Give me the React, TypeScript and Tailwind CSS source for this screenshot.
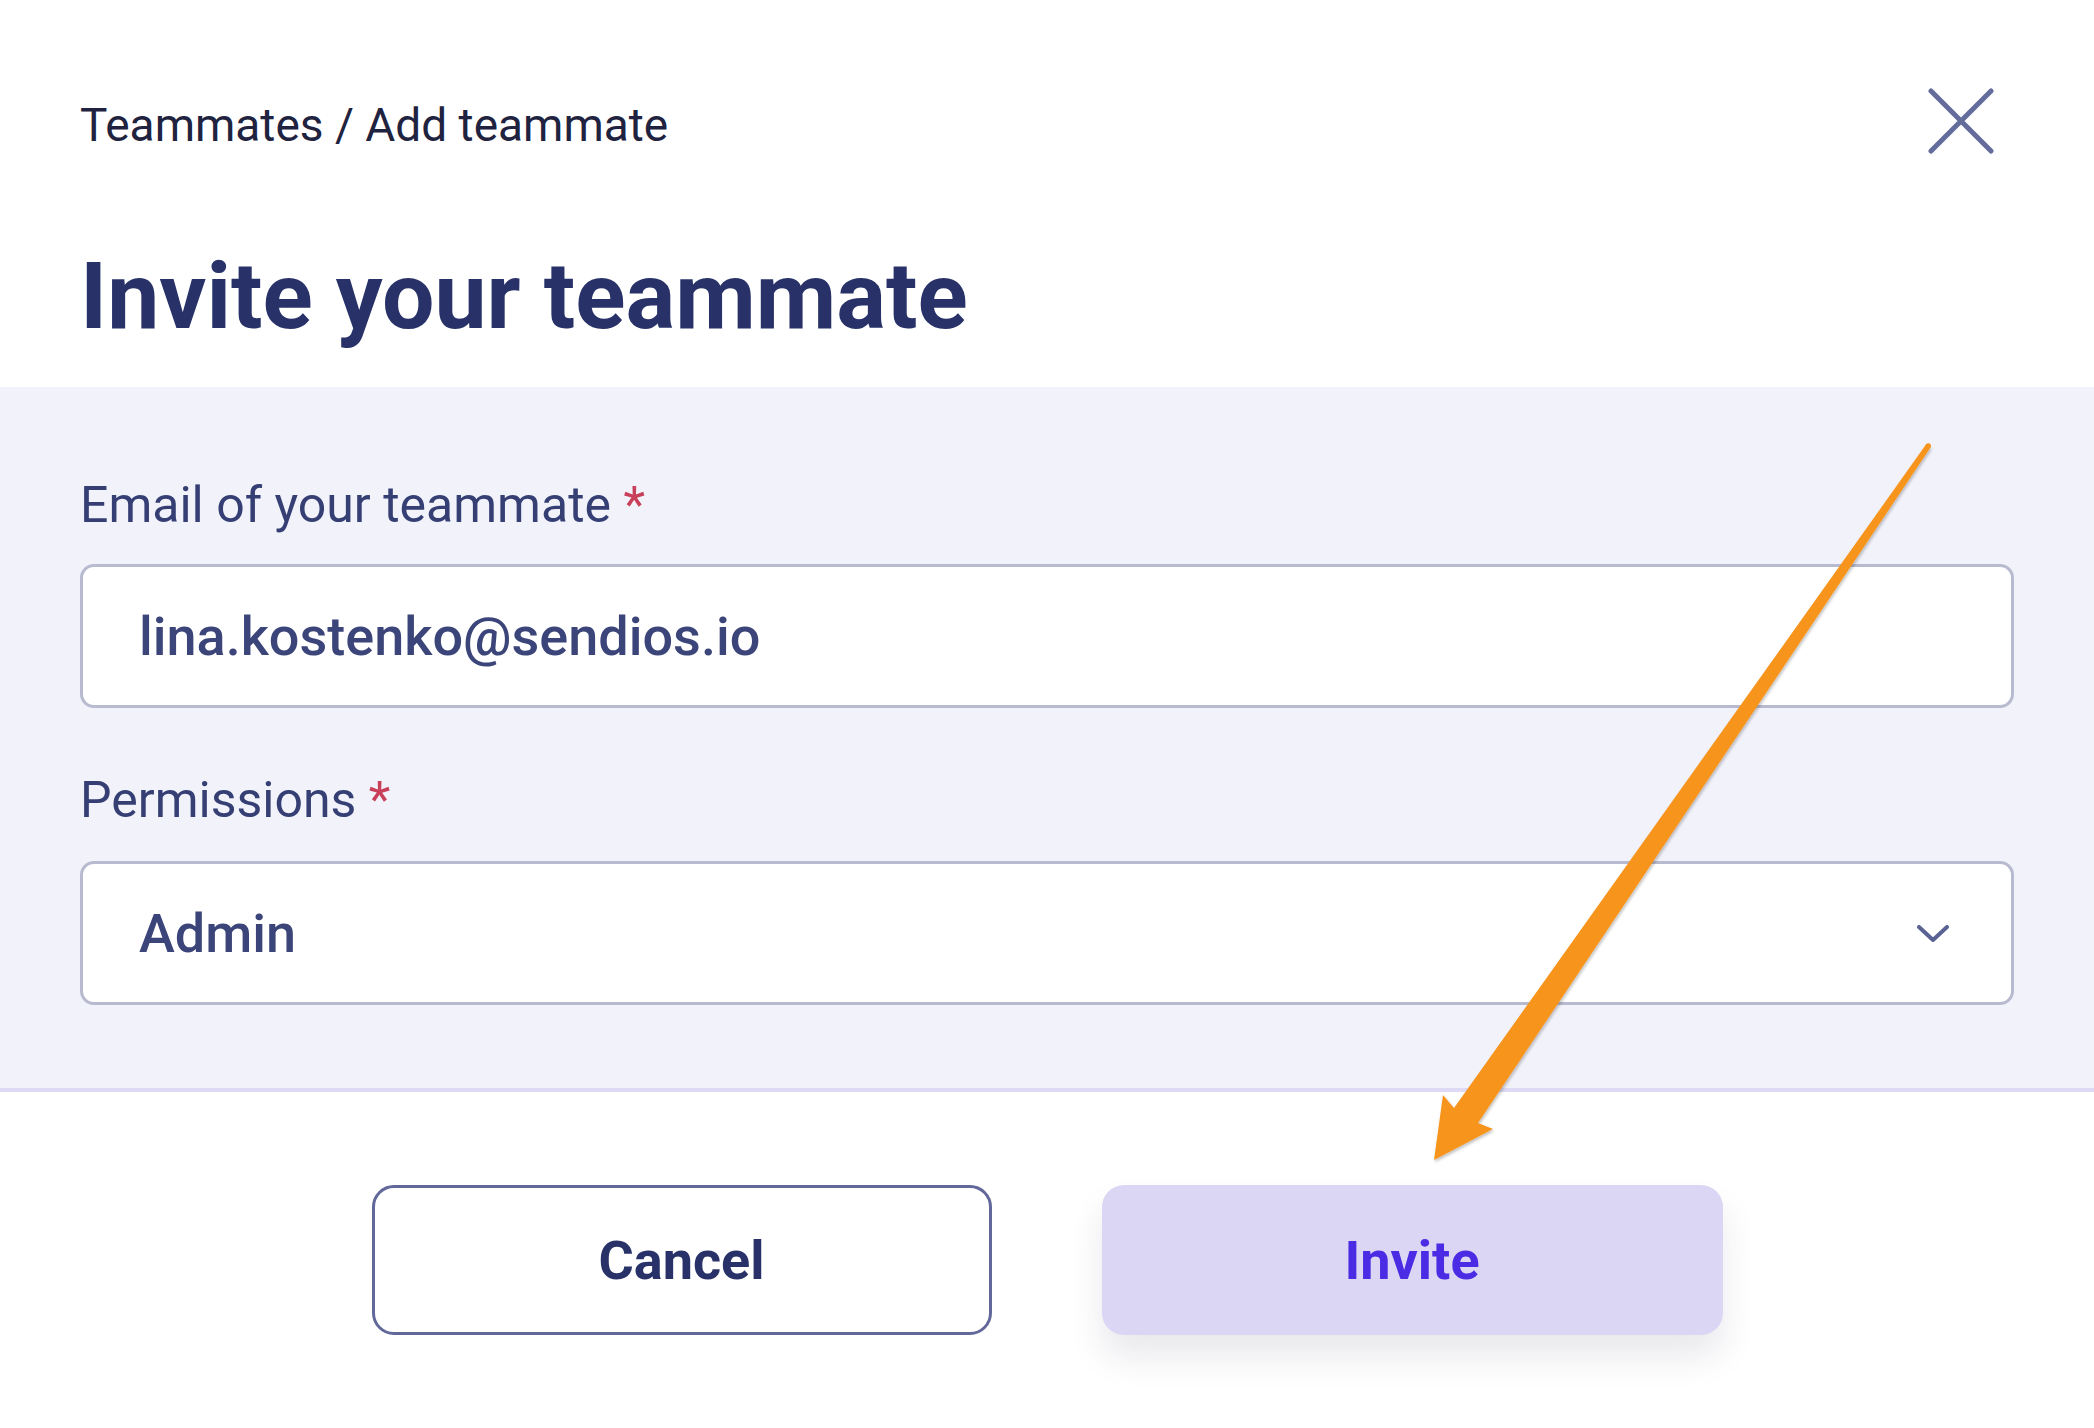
import React from "react";

const font = { fontFamily: "Roboto, 'Noto Sans', sans-serif" };

function CloseIcon() {
  return (
    <svg width="66" height="66" viewBox="0 0 66 66" fill="none">
      <path d="M3 3 L63 63 M63 3 L3 63" stroke="#636c9a" strokeWidth="5" strokeLinecap="round" />
    </svg>
  );
}

function Chevron() {
  return (
    <svg width="32" height="17" viewBox="0 0 32 17" fill="none">
      <path d="M2 2 L16 15 L30 2" stroke="#5a6394" strokeWidth="4" strokeLinecap="round" strokeLinejoin="round" />
    </svg>
  );
}

// hand-drawn annotation arrow laid over the dialog
function Arrow() {
  return (
    <svg
      className="absolute inset-0 pointer-events-none"
      width="2094"
      height="1428"
      viewBox="0 0 2094 1428"
    >
      <defs>
        <filter id="shade" x="-20%" y="-20%" width="140%" height="140%">
          <feDropShadow dx="1" dy="2" stdDeviation="1.5" floodColor="#000" floodOpacity="0.25" />
        </filter>
      </defs>
      <polygon
        filter="url(#shade)"
        fill="#f7941d"
        points="1926,444.6 1930.5,447.6 1478,1123 1493,1129 1434,1160 1443,1095 1454,1108"
      />
      <circle cx="1928.3" cy="446" r="2.7" fill="#f7941d" />
    </svg>
  );
}

export default function App() {
  return (
    <div className="relative w-[2094px] h-[1428px] bg-white overflow-hidden" style={font}>
      {/* header */}
      <div className="pl-[80px] pr-[100px] pt-[88px]">
        <div className="flex justify-between items-start">
          <p className="mt-[15px] text-[46px] leading-[44px] text-[#1f2340]">
            Teammates / Add teammate
          </p>
          <CloseIcon />
        </div>
        <h1 className="mt-[96px] mb-[44px] text-[93px] leading-[93px] font-bold text-[#283269]">
          Invite your teammate
        </h1>
      </div>

      {/* form */}
      <div className="bg-[#f1f2fa] border-b-[4px] border-[#dedaf5] px-[80px] pt-[94px] pb-[83px]">
        <label className="block text-[50px] leading-[48px] text-[#353f74]">
          Email of your teammate <span className="text-[#c8405a]">*</span>
        </label>
        <div className="mt-[35px] h-[144px] flex items-center px-[56px] bg-white border-[3px] border-[#b8bbcf] rounded-[14px] text-[54px] font-medium text-[#3b4579]">
          lina.kostenko@sendios.io
        </div>
        <label className="block mt-[68px] text-[50px] leading-[48px] text-[#353f74]">
          Permissions <span className="text-[#c8405a]">*</span>
        </label>
        <div className="mt-[37px] h-[144px] flex items-center justify-between pl-[56px] pr-[62px] bg-white border-[3px] border-[#b8bbcf] rounded-[14px] text-[54px] font-medium text-[#3b4579]">
          <span>Admin</span>
          <Chevron />
        </div>
      </div>

      {/* actions */}
      <div className="flex justify-center gap-[110px] pt-[93px]">
        <button className="w-[620px] h-[150px] rounded-[22px] border-[3px] border-[#62699a] bg-white text-[54px] font-bold text-[#283269]">
          Cancel
        </button>
        <button className="w-[621px] h-[150px] rounded-[22px] bg-[#dbd6f4] text-[54px] font-bold text-[#4b2be3] shadow-[0_22px_34px_rgba(40,40,80,0.10)]">
          Invite
        </button>
      </div>

      <Arrow />
    </div>
  );
}
